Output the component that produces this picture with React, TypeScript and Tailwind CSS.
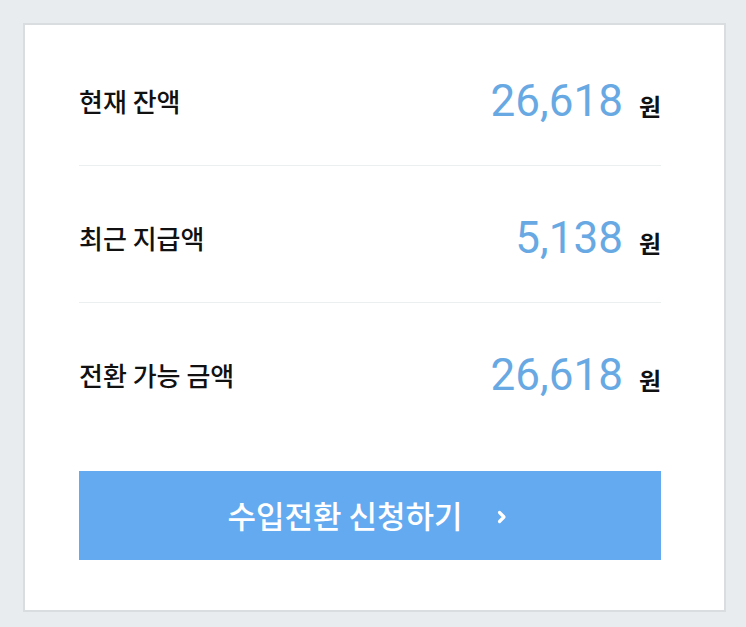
const rows = [
  { label: "현재 잔액", amount: "26,618" },
  { label: "최근 지급액", amount: "5,138" },
  { label: "전환 가능 금액", amount: "26,618" },
];

function AmountRow({ label, amount, last }: { label: string; amount: string; last?: boolean }) {
  return (
    <div
      className={`flex h-[137px] items-start justify-between pt-[50px] ${
        last ? "" : "border-b border-[#eceff0]"
      }`}
    >
      <span className="mt-[2px] text-[26px] font-medium leading-[40px] text-[#111]">{label}</span>
      <div className="flex items-baseline gap-[16px]">
        <span className="font-['Roboto',sans-serif] text-[44px] leading-[44px] text-[#68a9e3]">
          {amount}
        </span>
        <span className="text-[24px] font-semibold text-[#111]">원</span>
      </div>
    </div>
  );
}

export default function App() {
  return (
    <div className="min-h-[627px] bg-[#e8ecef] p-[23px] font-['Noto_Sans_CJK_KR','Noto_Sans',sans-serif]">
      <div className="h-[589px] w-[703px] border-2 border-[#d9dde0] bg-white pl-[54px] pr-[63px] pt-[4px]">
        {rows.map((r, i) => (
          <AmountRow key={r.label} label={r.label} amount={r.amount} last={i === rows.length - 1} />
        ))}
        <button className="mt-[31px] flex h-[89px] w-full items-center justify-center gap-[34px] bg-[#64aaf0] pr-[6px] text-white">
          <span className="text-[31px] font-medium">수입전환 신청하기</span>
          <svg width="10" height="14" viewBox="0 0 10 14" className="mt-[2px]">
            <path d="M2.5 2.5 L7 7 L2.5 11.5" fill="none" stroke="white" strokeWidth="3.2" strokeLinecap="round" strokeLinejoin="round" />
          </svg>
        </button>
      </div>
    </div>
  );
}
